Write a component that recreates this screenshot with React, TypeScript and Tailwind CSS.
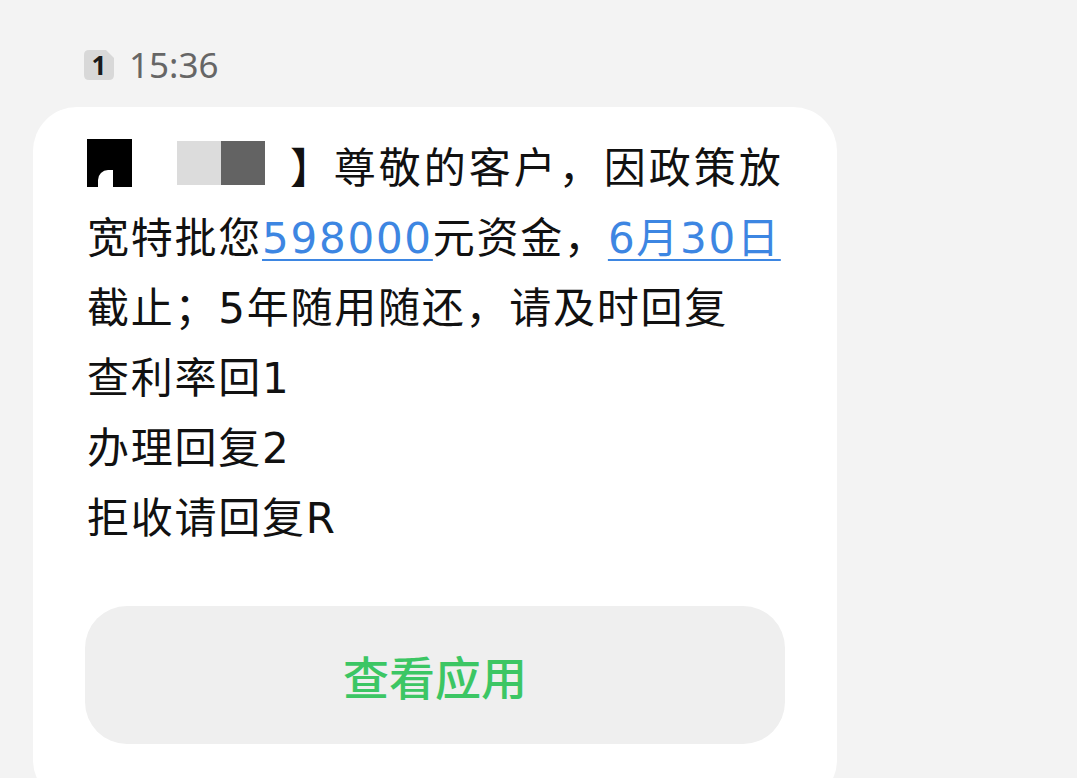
import React from "react";

const font = "font-['Noto_Sans_CJK_SC','Noto_Sans',sans-serif]";
const body = "font-['DejaVu_Sans','Noto_Sans_CJK_SC',sans-serif]";

function SimBadge() {
  return (
    <span className="relative flex h-[30px] w-[30px] items-center justify-center">
      <svg className="absolute inset-0" width="30" height="30" viewBox="0 0 30 30">
        <path d="M5 0H22L30 8V25Q30 30 25 30H5Q0 30 0 25V5Q0 0 5 0Z" fill="#d8d8d8" />
      </svg>
      <span className="relative font-['Noto_Sans',sans-serif] text-[26px] font-bold leading-none text-[#1a1a1a]">
        1
      </span>
    </span>
  );
}

function Link({ children }: { children: React.ReactNode }) {
  return (
    <span className="text-[#3d86e2] underline decoration-[2px] underline-offset-[6px]">{children}</span>
  );
}

export default function App() {
  return (
    <div className={`min-h-screen overflow-hidden bg-[#f3f3f3] ${font}`}>
      <div className="flex items-center gap-[15px] pl-[84px] pt-[50px]">
        <SimBadge />
        <span className="font-['Noto_Sans',sans-serif] text-[35px] leading-[30px] text-[#666666]">15:36</span>
      </div>

      <div className="ml-[33px] mt-[27px] w-[804px] rounded-[44px] bg-white pb-[60px] pl-[54px] pr-[52px] pt-[27px]">
        <div className={`${body} text-[42px] leading-[70px] tracking-[1.75px] text-[#111111]`}>
          <div className="flex items-center">
            {/* redacted sender name */}
            <span className="relative mt-[-12px] h-[48px] w-[45px] bg-black">
              <span className="absolute bottom-0 left-[11px] h-[17px] w-[15px] rounded-tl-[10px] bg-white" />
            </span>
            <span className="w-[45px]" />
            <span className="mt-[-12px] h-[44px] w-[44px] bg-[#dcdcdc]" />
            <span className="mt-[-12px] h-[44px] w-[44px] bg-[#636363]" />
            <span className="w-[25px]" />
            <span>】</span>
            <span className="tracking-[3px]">尊敬的客户，因政策放</span>
          </div>
          <div>
            宽特批您<Link>598000</Link>元资金，<Link>6月30日</Link>
          </div>
          <div>截止；5年随用随还，请及时回复</div>
          <div>查利率回1</div>
          <div>办理回复2</div>
          <div>拒收请回复R</div>
        </div>

        <button className="ml-[-2px] mt-[52px] flex h-[138px] w-[700px] items-center justify-center rounded-[42px] bg-[#efefef] text-[46px] font-medium text-[#3cc664]">
          查看应用
        </button>
      </div>
    </div>
  );
}
